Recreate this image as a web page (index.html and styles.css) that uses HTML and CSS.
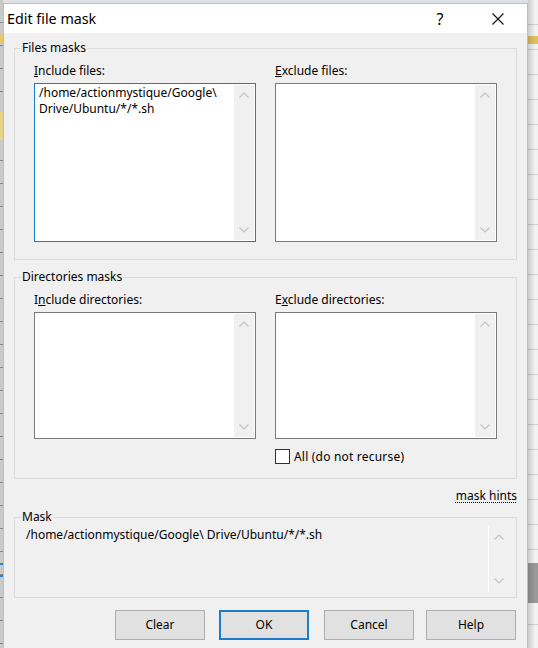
FILE: index.html
```html
<!DOCTYPE html>
<html>
<head>
<meta charset="utf-8">
<title>Edit file mask</title>
<link rel="stylesheet" href="styles.css">
</head>
<body>
<div class="desktop">
  <div class="bg-left"></div>
  <div class="dialog">
    <div class="titlebar">
      <span class="title">Edit file mask</span>
      <span class="tb-btn help">?</span>
      <span class="tb-btn"><svg width="12" height="12" viewBox="0 0 12 12"><path d="M0.5 0.5 L11.5 11.5 M11.5 0.5 L0.5 11.5" stroke="#111" stroke-width="1.1" fill="none"/></svg></span>
    </div>

    <fieldset class="group files">
      <legend>Files masks</legend>
      <div class="group-body">
        <div class="col">
          <div class="lbl"><u>I</u>nclude files:</div>
          <div class="edit focused tall">
            <div class="edit-text">/home/actionmystique/Google\
Drive/Ubuntu/*/*.sh</div>
            <div class="vscroll">
              <div class="arrow"><svg width="10" height="6" viewBox="0 0 10 6"><polyline points="0.5,5.5 5,1 9.5,5.5" fill="none" stroke="#c3c3c3" stroke-width="1.2"/></svg></div>
              <div class="arrow"><svg width="10" height="6" viewBox="0 0 10 6"><polyline points="0.5,0.5 5,5 9.5,0.5" fill="none" stroke="#c3c3c3" stroke-width="1.2"/></svg></div>
            </div>
          </div>
        </div>
        <div class="col">
          <div class="lbl"><u>E</u>xclude files:</div>
          <div class="edit tall">
            <div class="edit-text"></div>
            <div class="vscroll">
              <div class="arrow"><svg width="10" height="6" viewBox="0 0 10 6"><polyline points="0.5,5.5 5,1 9.5,5.5" fill="none" stroke="#c3c3c3" stroke-width="1.2"/></svg></div>
              <div class="arrow"><svg width="10" height="6" viewBox="0 0 10 6"><polyline points="0.5,0.5 5,5 9.5,0.5" fill="none" stroke="#c3c3c3" stroke-width="1.2"/></svg></div>
            </div>
          </div>
        </div>
      </div>
    </fieldset>

    <fieldset class="group dirs">
      <legend>Directories masks</legend>
      <div class="group-body">
        <div class="col">
          <div class="lbl">I<u>n</u>clude directories:</div>
          <div class="edit short">
            <div class="edit-text"></div>
            <div class="vscroll">
              <div class="arrow"><svg width="10" height="6" viewBox="0 0 10 6"><polyline points="0.5,5.5 5,1 9.5,5.5" fill="none" stroke="#c3c3c3" stroke-width="1.2"/></svg></div>
              <div class="arrow"><svg width="10" height="6" viewBox="0 0 10 6"><polyline points="0.5,0.5 5,5 9.5,0.5" fill="none" stroke="#c3c3c3" stroke-width="1.2"/></svg></div>
            </div>
          </div>
        </div>
        <div class="col">
          <div class="lbl">E<u>x</u>clude directories:</div>
          <div class="edit short">
            <div class="edit-text"></div>
            <div class="vscroll">
              <div class="arrow"><svg width="10" height="6" viewBox="0 0 10 6"><polyline points="0.5,5.5 5,1 9.5,5.5" fill="none" stroke="#c3c3c3" stroke-width="1.2"/></svg></div>
              <div class="arrow"><svg width="10" height="6" viewBox="0 0 10 6"><polyline points="0.5,0.5 5,5 9.5,0.5" fill="none" stroke="#c3c3c3" stroke-width="1.2"/></svg></div>
            </div>
          </div>
          <div class="check-row">
            <span class="checkbox"></span>
            <span class="check-label">All (do not recurse)</span>
          </div>
        </div>
      </div>
    </fieldset>

    <div class="hints-row"><span class="hints">mask hints</span></div>

    <fieldset class="group mask">
      <legend>Mask</legend>
      <div class="mask-body">
        <div class="mask-text">/home/actionmystique/Google\ Drive/Ubuntu/*/*.sh</div>
        <div class="mask-scroll">
          <div class="arrow"><svg width="10" height="6" viewBox="0 0 10 6"><polyline points="0.5,5.5 5,1 9.5,5.5" fill="none" stroke="#c3c3c3" stroke-width="1.2"/></svg></div>
          <div class="arrow"><svg width="10" height="6" viewBox="0 0 10 6"><polyline points="0.5,0.5 5,5 9.5,0.5" fill="none" stroke="#c3c3c3" stroke-width="1.2"/></svg></div>
        </div>
      </div>
    </fieldset>

    <div class="buttons">
      <button class="btn">Clear</button>
      <button class="btn default gap-ok">OK</button>
      <button class="btn gap-cancel">Cancel</button>
      <button class="btn gap-help">Help</button>
    </div>
  </div>
  <div class="bg-right"></div>
</div>
</body>
</html>
```

FILE: styles.css
```css
* { box-sizing: border-box; }

html, body {
  margin: 0;
  padding: 0;
}

body {
  width: 538px;
  height: 648px;
  overflow: hidden;
  background: #dde1e6;
  font-family: "Noto Sans", "Open Sans", sans-serif;
  font-size: 12px;
  line-height: 16px;
  color: #000;
}

.desktop {
  display: flex;
  height: 648px;
}

.bg-left {
  width: 3px;
  flex: none;
  background:
    linear-gradient(#e2c868, #e2c868) 0 34px / 3px 10px no-repeat,
    linear-gradient(#e6d588, #e6d588) 0 112px / 3px 28px no-repeat,
    linear-gradient(#2f7fcf, #2f7fcf) 0 563px / 3px 2px no-repeat,
    linear-gradient(#2f7fcf, #2f7fcf) 0 575px / 3px 2px no-repeat,
    repeating-linear-gradient(to bottom, #c9c9c9 0 22px, #8a8a8a 22px 23px);
}

.bg-right {
  flex: 1;
  background:
    linear-gradient(to right, rgba(0, 0, 0, 0.16), rgba(0, 0, 0, 0) 7px),
    linear-gradient(#e0c15a, #e0c15a) 0 36px / 10px 8px no-repeat,
    linear-gradient(#9a9a9a, #9a9a9a) 0 563px / 10px 40px no-repeat,
    repeating-linear-gradient(to bottom, #f2f2f2 0 24px, #cfcfcf 24px 25px);
}

.dialog {
  width: 525px;
  flex: none;
  margin-top: 3px;
  background: #f0f0f0;
  border: 1px solid #aec0d6;
  border-bottom: none;
  display: flex;
  flex-direction: column;
}

.titlebar {
  height: 29px;
  flex: none;
  background: #fff;
  display: flex;
  align-items: center;
  padding-left: 3px;
}

.title {
  flex: 1;
  font-size: 14.3px;
  line-height: 20px;
}

.tb-btn {
  width: 58px;
  height: 29px;
  display: flex;
  align-items: center;
  justify-content: center;
  font-size: 15px;
}

.tb-btn.help {
  font-size: 16px;
}

.group {
  margin: 0 10px;
  padding: 0;
  border: 1px solid #dcdcdc;
  min-width: 0;
}

.group legend {
  margin-left: 6px;
  padding: 0 1px;
  line-height: 16px;
}

.files { margin-top: 7px; }
.dirs { margin-top: 9px; }
.mask { margin-top: 5px; }

.group-body {
  display: grid;
  grid-template-columns: 222px 222px;
  column-gap: 19px;
  padding: 7px 19px 17px;
}

.dirs .group-body { padding-bottom: 14px; }

.lbl {
  margin-bottom: 4px;
}

.edit {
  display: flex;
  background: #fff;
  border: 1px solid #7a7a7a;
}

.edit.focused { border-color: #1a7ccd; }
.edit.tall { height: 159px; }
.edit.short { height: 127px; }

.edit-text {
  flex: 1;
  padding: 1px 4px;
  white-space: pre;
}

.vscroll {
  width: 20px;
  margin: 1px;
  background: #f0f0f0;
  display: flex;
  flex-direction: column;
  justify-content: space-between;
}

.arrow {
  height: 20px;
  display: flex;
  align-items: center;
  justify-content: center;
}

.check-row {
  display: flex;
  align-items: center;
  gap: 4px;
  margin-top: 10px;
  height: 15px;
}

.check-label {
  letter-spacing: 0.2px;
}

.checkbox {
  width: 15px;
  height: 15px;
  border: 1px solid #333;
  background: #fff;
  flex: none;
}

.hints-row {
  margin: 9px 10px 0;
  text-align: right;
}

.hints {
  text-decoration: underline dotted;
  text-underline-offset: 2px;
}

.mask-body {
  display: flex;
  padding: 1px 7px 5px 7px;
}

.mask-text {
  flex: 1;
  height: 66px;
  padding: 1px 4px;
  white-space: pre;
}

.mask-scroll {
  width: 21px;
  height: 66px;
  border-left: 1px solid #fff;
  display: flex;
  flex-direction: column;
  justify-content: space-between;
}

.mask-scroll .arrow { height: 22px; }

.buttons {
  display: flex;
  justify-content: flex-end;
  margin-top: 12px;
  padding-right: 11px;
}

.gap-ok { margin-left: 14px; }
.gap-cancel { margin-left: 15px; }
.gap-help { margin-left: 12px; }

.btn {
  width: 90px;
  height: 30px;
  padding: 0 0 1px;
  background: #e1e1e1;
  border: 1px solid #adadad;
  font-family: inherit;
  font-size: 12px;
  color: #000;
  display: flex;
  align-items: center;
  justify-content: center;
}

.btn.default {
  border: 2px solid #1a7ccd;
}
```
